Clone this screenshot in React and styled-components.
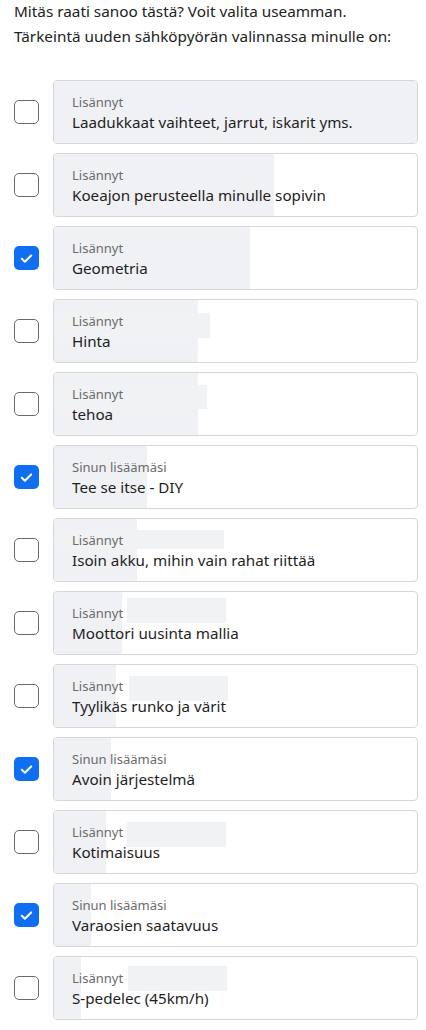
import React from "react";
import styled, { createGlobalStyle } from "styled-components";

const GlobalStyle = createGlobalStyle`
  body {
    margin: 0;
    background: #ffffff;
    font-family: "Noto Sans", "Open Sans", Arial, sans-serif;
    color: #222222;
  }
`;

const Page = styled.div`
  padding: 0 8px 0 14px;
`;

const Intro = styled.p`
  margin: 0;
  font-size: 15.3px;
  line-height: 25px;
  white-space: nowrap;
  color: #222222;
  &:first-child {
    margin-top: -1px;
  }
`;

const List = styled.div`
  display: flex;
  flex-direction: column;
  gap: 9px;
  margin-top: 31px;
`;

const Row = styled.label`
  display: flex;
  align-items: center;
  gap: 14px;
  cursor: pointer;
`;

const Box = styled.span`
  flex: 0 0 auto;
  width: 25px;
  height: 24px;
  box-sizing: border-box;
  border-radius: 5px;
  border: ${(p) => (p.checked ? "none" : "1.5px solid #6a6a6a")};
  background: ${(p) => (p.checked ? "#0f6ff0" : "#ffffff")};
  display: flex;
  align-items: center;
  justify-content: center;
`;

const Card = styled.div`
  position: relative;
  flex: 1;
  height: 64px;
  box-sizing: border-box;
  border: 1px solid #d7d7d7;
  border-radius: 4px;
  overflow: hidden;
  background: #ffffff;
`;

const Bar = styled.div`
  position: absolute;
  left: 0;
  top: 0;
  bottom: 0;
  background: #f0f1f4;
`;

const Ghost = styled.div`
  position: absolute;
  background: #f1f2f4;
`;

const Content = styled.div`
  position: relative;
  display: flex;
  flex-direction: column;
  padding: 13px 18px 0;
`;

const Tag = styled.span`
  font-size: 13px;
  line-height: 17px;
  color: #6b6b6b;
`;

const Text = styled.span`
  font-size: 15.2px;
  line-height: 22px;
  color: #1e1e1e;
`;

const items = [
  { tag: "Lisännyt", text: "Laadukkaat vaihteet, jarrut, iskarit yms.", bar: 365 },
  { tag: "Lisännyt", text: "Koeajon perusteella minulle sopivin", bar: 220 },
  { tag: "Lisännyt", text: "Geometria", bar: 196, checked: true },
  { tag: "Lisännyt", text: "Hinta", bar: 144, ghost: [0, 156, 13, 25] },
  { tag: "Lisännyt", text: "tehoa", bar: 144, ghost: [0, 153, 12, 24] },
  { tag: "Sinun lisäämäsi", text: "Tee se itse - DIY", bar: 93, checked: true },
  { tag: "Lisännyt", text: "Isoin akku, mihin vain rahat riittää", bar: 83, ghost: [0, 170, 11, 19] },
  { tag: "Lisännyt", text: "Moottori uusinta mallia", bar: 68, ghost: [73, 99, 6, 25] },
  { tag: "Lisännyt", text: "Tyylikäs runko ja värit", bar: 62, ghost: [75, 99, 11, 25] },
  { tag: "Sinun lisäämäsi", text: "Avoin järjestelmä", bar: 57, checked: true },
  { tag: "Lisännyt", text: "Kotimaisuus", bar: 52, ghost: [73, 99, 11, 25] },
  { tag: "Sinun lisäämäsi", text: "Varaosien saatavuus", bar: 37, checked: true },
  { tag: "Lisännyt", text: "S-pedelec (45km/h)", bar: 27, ghost: [74, 99, 9, 25] },
];

function Check() {
  return (
    <svg width="17" height="17" viewBox="0 0 16 16" fill="none">
      <path
        d="M3.6 8.2l2.9 2.9 5.9-6"
        stroke="#ffffff"
        strokeWidth="1.9"
        strokeLinecap="round"
        strokeLinejoin="round"
      />
    </svg>
  );
}

export default function App() {
  return (
    <Page>
      <GlobalStyle />
      <Intro>Mitäs raati sanoo tästä? Voit valita useamman.</Intro>
      <Intro>Tärkeintä uuden sähköpyörän valinnassa minulle on:</Intro>
      <List>
        {items.map((it) => (
          <Row key={it.text}>
            <Box checked={it.checked}>{it.checked && <Check />}</Box>
            <Card>
              <Bar style={{ width: it.bar }} />
              {it.ghost && (
                <Ghost
                  style={{
                    left: it.ghost[0],
                    width: it.ghost[1],
                    top: it.ghost[2],
                    height: it.ghost[3],
                  }}
                />
              )}
              <Content>
                <Tag>{it.tag}</Tag>
                <Text>{it.text}</Text>
              </Content>
            </Card>
          </Row>
        ))}
      </List>
    </Page>
  );
}
